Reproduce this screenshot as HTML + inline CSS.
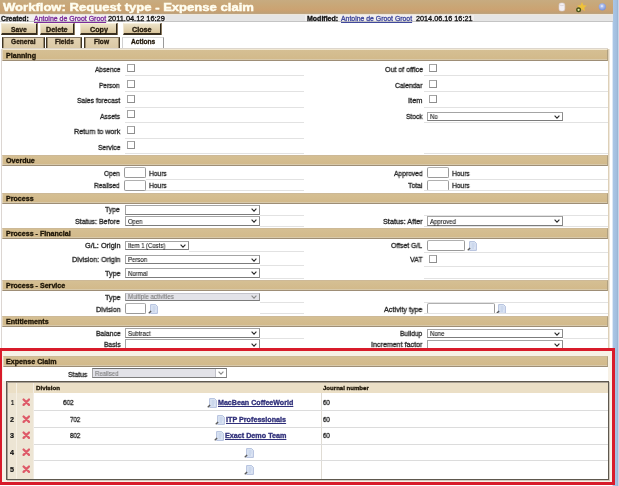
<!DOCTYPE html>
<html><head><meta charset="utf-8"><style>
html,body{margin:0;padding:0;}
body{width:619px;height:486px;overflow:hidden;position:relative;background:#fff;font-family:"Liberation Sans",sans-serif;}
div,svg{position:absolute;}
.t{white-space:nowrap;line-height:1em;transform-origin:0 0;will-change:transform;}
</style></head><body>
<div style="left:0px;top:0px;width:613px;height:14px;background:linear-gradient(#c7ab80 0%,#c9a676 45%,#cba272 70%,#c2a074 88%,#bca584 100%)"></div>
<div style="left:0px;top:14px;width:613px;height:1px;background:#ede6da"></div>
<div class="t" style="left:3.40px;top:2px;font-size:11.00px;font-weight:bold;color:#fffef0;transform:scaleX(1.1874);-webkit-text-stroke:0.45px #fffef0;">Workflow: Request type - Expense claim</div>
<svg style="position:absolute;left:556px;top:0px" width="54" height="14" viewBox="0 0 54 14">
<rect x="3" y="3" width="5.8" height="8" rx="2" fill="#f4f0f4" stroke="#d8d0d4" stroke-width="0.6"/><path d="M3.4,5 Q5.9,6.4 8.4,5" fill="none" stroke="#d0c8cc" stroke-width="0.6"/>
<polygon points="26,2 27.4,5.2 30.8,5.5 28.2,7.7 29,11 26,9.3 23,11 23.8,7.7 21.2,5.5 24.6,5.2" fill="#efc23a"/>
<circle cx="22.6" cy="9.8" r="2.5" fill="#4a5418"/><circle cx="22.6" cy="9.8" r="1.1" fill="#e8e4a8"/>
<defs><radialGradient id="gl" cx="0.45" cy="0.4" r="0.6"><stop offset="0" stop-color="#ffffff"/><stop offset="0.3" stop-color="#b4c4f0"/><stop offset="1" stop-color="#7890d8"/></radialGradient></defs><circle cx="46.3" cy="6.8" r="3.6" fill="url(#gl)"/>
</svg>
<div style="left:612px;top:22px;width:1px;height:464px;background:#dce8f6"></div>
<div style="left:613px;top:0px;width:5px;height:486px;background:linear-gradient(90deg,#aac6e6,#a2bede 70%,#98b2d2)"></div>
<div style="left:618px;top:0px;width:1px;height:486px;background:#c8d6e8"></div>
<div style="left:0px;top:15px;width:613px;height:6px;background:#e5e5e5"></div>
<div style="left:0px;top:21px;width:613px;height:1px;background:#c4c4c4"></div>
<div style="left:0px;top:15px;width:166px;height:6px;background:#f1efef"></div>
<div style="left:305px;top:15px;width:169px;height:6px;background:#f1efef"></div>
<div class="t" style="left:0.80px;top:16px;font-size:6.50px;font-weight:bold;color:#111;transform:scaleX(1.0543);-webkit-text-stroke:0.3px #111;">Created:</div>
<div class="t" style="left:33.90px;top:16px;font-size:6.50px;font-weight:normal;color:#7a2a9a;transform:scaleX(1.0728);-webkit-text-stroke:0.3px #7a2a9a;text-decoration:underline;">Antoine de Groot Groot</div>
<div class="t" style="left:108.00px;top:16px;font-size:6.50px;font-weight:normal;color:#111;transform:scaleX(1.1332);-webkit-text-stroke:0.3px #111;">2011.04.12 16:29</div>
<div class="t" style="left:307.00px;top:16px;font-size:6.50px;font-weight:bold;color:#111;transform:scaleX(1.0768);-webkit-text-stroke:0.3px #111;">Modified:</div>
<div class="t" style="left:341.40px;top:16px;font-size:6.50px;font-weight:normal;color:#40489c;transform:scaleX(1.0579);-webkit-text-stroke:0.3px #40489c;text-decoration:underline;">Antoine de Groot Groot</div>
<div class="t" style="left:416.00px;top:16px;font-size:6.50px;font-weight:normal;color:#111;transform:scaleX(1.1165);-webkit-text-stroke:0.3px #111;">2014.06.16 16:21</div>
<div style="left:1px;top:23px;width:36px;height:12px;background:linear-gradient(#ece2c8,#d9c59c);border-top:1px solid #f6efdc;border-left:1px solid #efe5cf;border-right:1px solid #2e2618;border-bottom:2px solid #3a3020;box-sizing:border-box;box-shadow:1px 0 0 #8a7a60;"></div>
<div class="t" style="left:11.30px;top:27px;font-size:6.50px;font-weight:bold;color:#241a0c;transform:scaleX(1.0408);-webkit-text-stroke:0.3px #241a0c;">Save</div>
<div style="left:40px;top:23px;width:34px;height:12px;background:linear-gradient(#ece2c8,#d9c59c);border-top:1px solid #f6efdc;border-left:1px solid #efe5cf;border-right:1px solid #2e2618;border-bottom:2px solid #3a3020;box-sizing:border-box;box-shadow:1px 0 0 #8a7a60;"></div>
<div class="t" style="left:45.50px;top:27px;font-size:6.50px;font-weight:bold;color:#241a0c;transform:scaleX(1.1071);-webkit-text-stroke:0.3px #241a0c;">Delete</div>
<div style="left:80px;top:23px;width:37px;height:12px;background:linear-gradient(#ece2c8,#d9c59c);border-top:1px solid #f6efdc;border-left:1px solid #efe5cf;border-right:1px solid #2e2618;border-bottom:2px solid #3a3020;box-sizing:border-box;box-shadow:1px 0 0 #8a7a60;"></div>
<div class="t" style="left:89.50px;top:27px;font-size:6.50px;font-weight:bold;color:#241a0c;transform:scaleX(1.1071);-webkit-text-stroke:0.3px #241a0c;">Copy</div>
<div style="left:123px;top:23px;width:38px;height:12px;background:linear-gradient(#ece2c8,#d9c59c);border-top:1px solid #f6efdc;border-left:1px solid #efe5cf;border-right:1px solid #2e2618;border-bottom:2px solid #3a3020;box-sizing:border-box;box-shadow:1px 0 0 #8a7a60;"></div>
<div class="t" style="left:132.20px;top:27px;font-size:6.50px;font-weight:bold;color:#241a0c;transform:scaleX(1.1071);-webkit-text-stroke:0.3px #241a0c;">Close</div>
<div style="left:2px;top:37px;width:43px;height:12px;background:linear-gradient(#e2d2b2,#dac8a4);border-left:1px solid #3e3424;border-top:1px solid #857660;border-right:1px solid #3e3424;box-sizing:border-box;box-shadow:inset 1px 0 0 #9a8a6c,inset -1px 0 0 #9a8a6c"></div>
<div class="t" style="left:11.30px;top:39px;font-size:6.50px;font-weight:bold;color:#241a0c;transform:scaleX(1.0162);-webkit-text-stroke:0.3px #241a0c;">General</div>
<div style="left:46px;top:37px;width:36px;height:12px;background:linear-gradient(#e2d2b2,#dac8a4);border-left:1px solid #3e3424;border-top:1px solid #857660;border-right:1px solid #3e3424;box-sizing:border-box;box-shadow:inset 1px 0 0 #9a8a6c,inset -1px 0 0 #9a8a6c"></div>
<div class="t" style="left:55.20px;top:39px;font-size:6.50px;font-weight:bold;color:#241a0c;transform:scaleX(0.9956);-webkit-text-stroke:0.3px #241a0c;">Fields</div>
<div style="left:84px;top:37px;width:36px;height:12px;background:linear-gradient(#e2d2b2,#dac8a4);border-left:1px solid #3e3424;border-top:1px solid #857660;border-right:1px solid #3e3424;box-sizing:border-box;box-shadow:inset 1px 0 0 #9a8a6c,inset -1px 0 0 #9a8a6c"></div>
<div class="t" style="left:94.48px;top:39px;font-size:6.50px;font-weight:bold;color:#241a0c;transform:scaleX(1.0162);-webkit-text-stroke:0.3px #241a0c;">Flow</div>
<div style="left:122px;top:37px;width:42px;height:13px;background:#fff;border-left:1px solid #d0d0d0;border-top:1px solid #dcdcdc;border-right:1px solid #9a9a9a;box-sizing:border-box"></div>
<div class="t" style="left:130.89px;top:39px;font-size:6.50px;font-weight:bold;color:#241a0c;transform:scaleX(1.0162);-webkit-text-stroke:0.3px #241a0c;">Actions</div>
<div style="left:1px;top:49px;width:1px;height:299px;background:#dcd6d2"></div>
<div style="left:608px;top:49px;width:1px;height:299px;background:#ddd0b8"></div>
<div style="left:609px;top:49px;width:1px;height:299px;background:#f0e8dc"></div>
<div style="left:2px;top:48px;width:606px;height:1px;background:#ddd6cc"></div>
<div style="left:2px;top:49px;width:606px;height:12px;background:linear-gradient(#d5bf93,#d2b98a);border-top:1px solid #cdb997;border-bottom:1px solid #9e8e76;border-right:1px solid #b0a080;border-left:1px solid #e0d2b8;box-sizing:border-box;box-shadow:inset 0 -1px 0 #d8c9aa;border-top-color:#f2e8d2"></div>
<div class="t" style="left:6.20px;top:53px;font-size:6.50px;font-weight:bold;color:#1c1406;transform:scaleX(1.0921);-webkit-text-stroke:0.3px #1c1406;">Planning</div>
<div style="left:2px;top:155px;width:606px;height:11px;background:linear-gradient(#d5bf93,#d2b98a);border-top:1px solid #cdb997;border-bottom:1px solid #9e8e76;border-right:1px solid #b0a080;border-left:1px solid #e0d2b8;box-sizing:border-box;box-shadow:inset 0 -1px 0 #d8c9aa"></div>
<div class="t" style="left:6.20px;top:158px;font-size:6.50px;font-weight:bold;color:#1c1406;transform:scaleX(1.0921);-webkit-text-stroke:0.3px #1c1406;">Overdue</div>
<div style="left:2px;top:193px;width:606px;height:11px;background:linear-gradient(#d5bf93,#d2b98a);border-top:1px solid #cdb997;border-bottom:1px solid #9e8e76;border-right:1px solid #b0a080;border-left:1px solid #e0d2b8;box-sizing:border-box;box-shadow:inset 0 -1px 0 #d8c9aa"></div>
<div class="t" style="left:6.20px;top:196px;font-size:6.50px;font-weight:bold;color:#1c1406;transform:scaleX(1.0921);-webkit-text-stroke:0.3px #1c1406;">Process</div>
<div style="left:2px;top:228px;width:606px;height:11px;background:linear-gradient(#d5bf93,#d2b98a);border-top:1px solid #cdb997;border-bottom:1px solid #9e8e76;border-right:1px solid #b0a080;border-left:1px solid #e0d2b8;box-sizing:border-box;box-shadow:inset 0 -1px 0 #d8c9aa"></div>
<div class="t" style="left:6.20px;top:231px;font-size:6.50px;font-weight:bold;color:#1c1406;transform:scaleX(1.0921);-webkit-text-stroke:0.3px #1c1406;">Process - Financial</div>
<div style="left:2px;top:280px;width:606px;height:11px;background:linear-gradient(#d5bf93,#d2b98a);border-top:1px solid #cdb997;border-bottom:1px solid #9e8e76;border-right:1px solid #b0a080;border-left:1px solid #e0d2b8;box-sizing:border-box;box-shadow:inset 0 -1px 0 #d8c9aa"></div>
<div class="t" style="left:6.20px;top:283px;font-size:6.50px;font-weight:bold;color:#1c1406;transform:scaleX(1.0921);-webkit-text-stroke:0.3px #1c1406;">Process - Service</div>
<div style="left:2px;top:316px;width:606px;height:11px;background:linear-gradient(#d5bf93,#d2b98a);border-top:1px solid #cdb997;border-bottom:1px solid #9e8e76;border-right:1px solid #b0a080;border-left:1px solid #e0d2b8;box-sizing:border-box;box-shadow:inset 0 -1px 0 #d8c9aa"></div>
<div class="t" style="left:6.20px;top:319px;font-size:6.50px;font-weight:bold;color:#1c1406;transform:scaleX(1.0921);-webkit-text-stroke:0.3px #1c1406;">Entitlements</div>
<div class="t" style="left:94.50px;top:66px;font-size:7.30px;font-weight:normal;color:#262626;transform:scaleX(0.8976);-webkit-text-stroke:0.3px #262626;">Absence</div>
<div style="left:127px;top:64px;width:8px;height:8px;border:1px solid #8e8e8e;border-top-color:#a4a4a4;border-left-color:#a4a4a4;background:#fff;box-sizing:border-box"></div>
<div class="t" style="left:99.40px;top:82px;font-size:7.30px;font-weight:normal;color:#262626;transform:scaleX(0.8906);-webkit-text-stroke:0.3px #262626;">Person</div>
<div style="left:127px;top:80px;width:8px;height:8px;border:1px solid #8e8e8e;border-top-color:#a4a4a4;border-left-color:#a4a4a4;background:#fff;box-sizing:border-box"></div>
<div class="t" style="left:76.80px;top:97px;font-size:7.30px;font-weight:normal;color:#262626;transform:scaleX(0.9339);-webkit-text-stroke:0.3px #262626;">Sales forecast</div>
<div style="left:127px;top:95px;width:8px;height:8px;border:1px solid #8e8e8e;border-top-color:#a4a4a4;border-left-color:#a4a4a4;background:#fff;box-sizing:border-box"></div>
<div class="t" style="left:100.00px;top:113px;font-size:7.30px;font-weight:normal;color:#262626;transform:scaleX(0.9129);-webkit-text-stroke:0.3px #262626;">Assets</div>
<div style="left:127px;top:110px;width:8px;height:8px;border:1px solid #8e8e8e;border-top-color:#a4a4a4;border-left-color:#a4a4a4;background:#fff;box-sizing:border-box"></div>
<div class="t" style="left:73.60px;top:128px;font-size:7.30px;font-weight:normal;color:#262626;transform:scaleX(0.9775);-webkit-text-stroke:0.3px #262626;">Return to work</div>
<div style="left:127px;top:126px;width:8px;height:8px;border:1px solid #8e8e8e;border-top-color:#a4a4a4;border-left-color:#a4a4a4;background:#fff;box-sizing:border-box"></div>
<div class="t" style="left:97.50px;top:144px;font-size:7.30px;font-weight:normal;color:#262626;transform:scaleX(0.9243);-webkit-text-stroke:0.3px #262626;">Service</div>
<div style="left:127px;top:141px;width:8px;height:8px;border:1px solid #8e8e8e;border-top-color:#a4a4a4;border-left-color:#a4a4a4;background:#fff;box-sizing:border-box"></div>
<div style="left:125px;top:75px;width:179px;height:1px;background:#e2e2e2"></div>
<div style="left:125px;top:91px;width:179px;height:1px;background:#e2e2e2"></div>
<div style="left:125px;top:107px;width:179px;height:1px;background:#e2e2e2"></div>
<div style="left:125px;top:122px;width:179px;height:1px;background:#e2e2e2"></div>
<div style="left:125px;top:138px;width:179px;height:1px;background:#e2e2e2"></div>
<div class="t" style="left:384.60px;top:66px;font-size:7.30px;font-weight:normal;color:#262626;transform:scaleX(0.9687);-webkit-text-stroke:0.3px #262626;">Out of office</div>
<div style="left:429px;top:64px;width:8px;height:8px;border:1px solid #8e8e8e;border-top-color:#a4a4a4;border-left-color:#a4a4a4;background:#fff;box-sizing:border-box"></div>
<div class="t" style="left:395.20px;top:82px;font-size:7.30px;font-weight:normal;color:#262626;transform:scaleX(0.9249);-webkit-text-stroke:0.3px #262626;">Calendar</div>
<div style="left:429px;top:80px;width:8px;height:8px;border:1px solid #8e8e8e;border-top-color:#a4a4a4;border-left-color:#a4a4a4;background:#fff;box-sizing:border-box"></div>
<div class="t" style="left:408.10px;top:97px;font-size:7.30px;font-weight:normal;color:#262626;transform:scaleX(1.0213);-webkit-text-stroke:0.3px #262626;">Item</div>
<div style="left:429px;top:95px;width:8px;height:8px;border:1px solid #8e8e8e;border-top-color:#a4a4a4;border-left-color:#a4a4a4;background:#fff;box-sizing:border-box"></div>
<div class="t" style="left:405.90px;top:113px;font-size:7.30px;font-weight:normal;color:#262626;transform:scaleX(0.9147);-webkit-text-stroke:0.3px #262626;">Stock</div>
<div style="left:427px;top:112px;width:136px;height:9px;background:#fff;border:1px solid #a4a4a4;border-top-color:#a4a4a4;border-bottom-color:#7c7c7c;border-right-color:#8c8c8c;box-sizing:border-box"></div>
<svg style="position:absolute;left:553.50px;top:114.50px" width="6" height="4" viewBox="0 0 6 4"><polyline points="0.6,0.7 3,3.1 5.4,0.7" fill="none" stroke="#2a2a2a" stroke-width="1.15"/></svg>
<div class="t" style="left:429.50px;top:114px;font-size:6.50px;font-weight:normal;color:#141414;transform:scaleX(0.9300);-webkit-text-stroke:0.1px #141414;">No</div>
<div style="left:424px;top:75px;width:184px;height:1px;background:#e2e2e2"></div>
<div style="left:424px;top:91px;width:184px;height:1px;background:#e2e2e2"></div>
<div style="left:424px;top:107px;width:184px;height:1px;background:#e2e2e2"></div>
<div style="left:424px;top:122px;width:184px;height:1px;background:#e2e2e2"></div>
<div class="t" style="left:103.90px;top:170px;font-size:7.30px;font-weight:normal;color:#262626;transform:scaleX(0.8903);-webkit-text-stroke:0.3px #262626;">Open</div>
<div style="left:124px;top:167px;width:22px;height:11px;border:1px solid #9a9a9a;border-top-color:#b0b0b0;border-radius:2px;background:#fff;box-sizing:border-box"></div>
<div class="t" style="left:148.60px;top:170px;font-size:7.30px;font-weight:normal;color:#262626;transform:scaleX(0.9089);-webkit-text-stroke:0.3px #262626;">Hours</div>
<div class="t" style="left:94.20px;top:182px;font-size:7.30px;font-weight:normal;color:#262626;transform:scaleX(0.9012);-webkit-text-stroke:0.3px #262626;">Realised</div>
<div style="left:124px;top:180px;width:22px;height:11px;border:1px solid #9a9a9a;border-top-color:#b0b0b0;border-radius:2px;background:#fff;box-sizing:border-box"></div>
<div class="t" style="left:148.60px;top:182px;font-size:7.30px;font-weight:normal;color:#262626;transform:scaleX(0.9089);-webkit-text-stroke:0.3px #262626;">Hours</div>
<div style="left:146px;top:179px;width:158px;height:1px;background:#e2e2e2"></div>
<div class="t" style="left:393.90px;top:170px;font-size:7.30px;font-weight:normal;color:#262626;transform:scaleX(0.9152);-webkit-text-stroke:0.3px #262626;">Approved</div>
<div style="left:427px;top:167px;width:22px;height:11px;border:1px solid #9a9a9a;border-top-color:#b0b0b0;border-radius:2px;background:#fff;box-sizing:border-box"></div>
<div class="t" style="left:451.60px;top:170px;font-size:7.30px;font-weight:normal;color:#262626;transform:scaleX(0.9089);-webkit-text-stroke:0.3px #262626;">Hours</div>
<div class="t" style="left:408.00px;top:182px;font-size:7.30px;font-weight:normal;color:#262626;transform:scaleX(0.9403);-webkit-text-stroke:0.3px #262626;">Total</div>
<div style="left:427px;top:180px;width:22px;height:11px;border:1px solid #9a9a9a;border-top-color:#b0b0b0;border-radius:2px;background:#fff;box-sizing:border-box"></div>
<div class="t" style="left:451.60px;top:182px;font-size:7.30px;font-weight:normal;color:#262626;transform:scaleX(0.9089);-webkit-text-stroke:0.3px #262626;">Hours</div>
<div style="left:449px;top:179px;width:159px;height:1px;background:#e2e2e2"></div>
<div class="t" style="left:105.00px;top:206px;font-size:7.30px;font-weight:normal;color:#262626;transform:scaleX(0.9351);-webkit-text-stroke:0.3px #262626;">Type</div>
<div style="left:125px;top:205px;width:135px;height:10px;background:#fff;border:1px solid #a4a4a4;border-top-color:#a4a4a4;border-bottom-color:#7c7c7c;border-right-color:#8c8c8c;box-sizing:border-box"></div>
<svg style="position:absolute;left:250.50px;top:208.00px" width="6" height="4" viewBox="0 0 6 4"><polyline points="0.6,0.7 3,3.1 5.4,0.7" fill="none" stroke="#2a2a2a" stroke-width="1.15"/></svg>
<div class="t" style="left:75.00px;top:218px;font-size:7.30px;font-weight:normal;color:#262626;transform:scaleX(0.9684);-webkit-text-stroke:0.3px #262626;">Status: Before</div>
<div style="left:125px;top:216px;width:135px;height:10px;background:#fff;border:1px solid #a4a4a4;border-top-color:#a4a4a4;border-bottom-color:#7c7c7c;border-right-color:#8c8c8c;box-sizing:border-box"></div>
<svg style="position:absolute;left:250.50px;top:219.00px" width="6" height="4" viewBox="0 0 6 4"><polyline points="0.6,0.7 3,3.1 5.4,0.7" fill="none" stroke="#2a2a2a" stroke-width="1.15"/></svg>
<div class="t" style="left:127.50px;top:219px;font-size:6.50px;font-weight:normal;color:#141414;transform:scaleX(0.9056);-webkit-text-stroke:0.1px #141414;">Open</div>
<div style="left:260px;top:215px;width:44px;height:1px;background:#e2e2e2"></div>
<div class="t" style="left:382.90px;top:218px;font-size:7.30px;font-weight:normal;color:#262626;transform:scaleX(0.9958);-webkit-text-stroke:0.3px #262626;">Status: After</div>
<div style="left:427px;top:216px;width:136px;height:10px;background:#fff;border:1px solid #a4a4a4;border-top-color:#a4a4a4;border-bottom-color:#7c7c7c;border-right-color:#8c8c8c;box-sizing:border-box"></div>
<svg style="position:absolute;left:553.50px;top:219.00px" width="6" height="4" viewBox="0 0 6 4"><polyline points="0.6,0.7 3,3.1 5.4,0.7" fill="none" stroke="#2a2a2a" stroke-width="1.15"/></svg>
<div class="t" style="left:429.50px;top:219px;font-size:6.50px;font-weight:normal;color:#141414;transform:scaleX(0.9300);-webkit-text-stroke:0.1px #141414;">Approved</div>
<div style="left:424px;top:215px;width:184px;height:1px;background:#e2e2e2"></div>
<div class="t" style="left:84.90px;top:242px;font-size:7.30px;font-weight:normal;color:#262626;transform:scaleX(1.0058);-webkit-text-stroke:0.3px #262626;">G/L: Origin</div>
<div style="left:125px;top:241px;width:64px;height:9px;background:#fff;border:1px solid #a4a4a4;border-top-color:#a4a4a4;border-bottom-color:#7c7c7c;border-right-color:#8c8c8c;box-sizing:border-box"></div>
<svg style="position:absolute;left:179.50px;top:243.50px" width="6" height="4" viewBox="0 0 6 4"><polyline points="0.6,0.7 3,3.1 5.4,0.7" fill="none" stroke="#2a2a2a" stroke-width="1.15"/></svg>
<div class="t" style="left:127.50px;top:243px;font-size:6.50px;font-weight:normal;color:#141414;transform:scaleX(0.9115);-webkit-text-stroke:0.1px #141414;">Item 1 (Costs)</div>
<div class="t" style="left:72.00px;top:256px;font-size:7.30px;font-weight:normal;color:#262626;transform:scaleX(0.9860);-webkit-text-stroke:0.3px #262626;">Division: Origin</div>
<div style="left:125px;top:255px;width:135px;height:9px;background:#fff;border:1px solid #a4a4a4;border-top-color:#a4a4a4;border-bottom-color:#7c7c7c;border-right-color:#8c8c8c;box-sizing:border-box"></div>
<svg style="position:absolute;left:250.50px;top:257.50px" width="6" height="4" viewBox="0 0 6 4"><polyline points="0.6,0.7 3,3.1 5.4,0.7" fill="none" stroke="#2a2a2a" stroke-width="1.15"/></svg>
<div class="t" style="left:127.50px;top:257px;font-size:6.50px;font-weight:normal;color:#141414;transform:scaleX(0.9300);-webkit-text-stroke:0.1px #141414;">Person</div>
<div class="t" style="left:104.90px;top:270px;font-size:7.30px;font-weight:normal;color:#262626;transform:scaleX(0.9794);-webkit-text-stroke:0.3px #262626;">Type</div>
<div style="left:125px;top:268px;width:135px;height:10px;background:#fff;border:1px solid #a4a4a4;border-top-color:#a4a4a4;border-bottom-color:#7c7c7c;border-right-color:#8c8c8c;box-sizing:border-box"></div>
<svg style="position:absolute;left:250.50px;top:271.00px" width="6" height="4" viewBox="0 0 6 4"><polyline points="0.6,0.7 3,3.1 5.4,0.7" fill="none" stroke="#2a2a2a" stroke-width="1.15"/></svg>
<div class="t" style="left:127.50px;top:271px;font-size:6.50px;font-weight:normal;color:#141414;transform:scaleX(0.9300);-webkit-text-stroke:0.1px #141414;">Normal</div>
<div style="left:189px;top:251px;width:115px;height:1px;background:#e2e2e2"></div>
<div style="left:260px;top:265px;width:44px;height:1px;background:#e2e2e2"></div>
<div class="t" style="left:391.30px;top:242px;font-size:7.30px;font-weight:normal;color:#262626;transform:scaleX(0.9416);-webkit-text-stroke:0.3px #262626;">Offset G/L</div>
<div style="left:427px;top:240px;width:38px;height:11px;border:1px solid #9a9a9a;border-top-color:#b0b0b0;border-radius:2px;background:#fff;box-sizing:border-box"></div>
<svg style="position:absolute;left:467.00px;top:240.50px" width="10" height="10" viewBox="0 0 10 10">
<path d="M2.6,0.6 H7.6 L9.4,2.4 V9.4 H2.6 Z" fill="#dce5f4" stroke="#a4b4d6" stroke-width="0.8"/>
<path d="M4.5,3 H7.6 M4.5,5 H7.6 M4.5,7 H7" stroke="#a8b8dc" stroke-width="0.6"/>
<path d="M0.3,8.8 L2.6,6.4 L3.6,7.6 L1.2,9.7 Z" fill="#5a5a5a"/>
</svg>
<div class="t" style="left:410.00px;top:256px;font-size:7.30px;font-weight:normal;color:#262626;transform:scaleX(0.9532);-webkit-text-stroke:0.3px #262626;">VAT</div>
<div style="left:429px;top:255px;width:8px;height:8px;border:1px solid #8e8e8e;border-top-color:#a4a4a4;border-left-color:#a4a4a4;background:#fff;box-sizing:border-box"></div>
<div style="left:424px;top:252px;width:184px;height:1px;background:#e2e2e2"></div>
<div style="left:424px;top:266px;width:184px;height:1px;background:#e2e2e2"></div>
<div class="t" style="left:104.90px;top:294px;font-size:7.30px;font-weight:normal;color:#262626;transform:scaleX(0.9794);-webkit-text-stroke:0.3px #262626;">Type</div>
<div style="left:125px;top:293px;width:135px;height:8px;background:#e2e2e8;border:1px solid #a4a4a4;border-top-color:#c4c4cc;border-bottom-color:#7c7c7c;border-right-color:#8c8c8c;box-sizing:border-box"></div>
<svg style="position:absolute;left:250.50px;top:295.00px" width="6" height="4" viewBox="0 0 6 4"><polyline points="0.6,0.7 3,3.1 5.4,0.7" fill="none" stroke="#8a8a8a" stroke-width="1.15"/></svg>
<div class="t" style="left:127.50px;top:294px;font-size:6.50px;font-weight:normal;color:#7a7a7a;transform:scaleX(0.9300);-webkit-text-stroke:0.1px #7a7a7a;">Multiple activities</div>
<div class="t" style="left:95.70px;top:306px;font-size:7.30px;font-weight:normal;color:#262626;transform:scaleX(0.9664);-webkit-text-stroke:0.3px #262626;">Division</div>
<div style="left:125px;top:303px;width:21px;height:11px;border:1px solid #9a9a9a;border-top-color:#b0b0b0;border-radius:2px;background:#fff;box-sizing:border-box"></div>
<svg style="position:absolute;left:148.00px;top:303.80px" width="10" height="10" viewBox="0 0 10 10">
<path d="M2.6,0.6 H7.6 L9.4,2.4 V9.4 H2.6 Z" fill="#dce5f4" stroke="#a4b4d6" stroke-width="0.8"/>
<path d="M4.5,3 H7.6 M4.5,5 H7.6 M4.5,7 H7" stroke="#a8b8dc" stroke-width="0.6"/>
<path d="M0.3,8.8 L2.6,6.4 L3.6,7.6 L1.2,9.7 Z" fill="#5a5a5a"/>
</svg>
<div style="left:260px;top:302px;width:44px;height:1px;background:#e2e2e2"></div>
<div class="t" style="left:384.00px;top:306px;font-size:7.30px;font-weight:normal;color:#262626;transform:scaleX(0.9885);-webkit-text-stroke:0.3px #262626;">Activity type</div>
<div style="left:427px;top:303px;width:68px;height:11px;border:1px solid #9a9a9a;border-top-color:#b0b0b0;border-radius:2px;background:#fff;box-sizing:border-box"></div>
<svg style="position:absolute;left:496.00px;top:303.80px" width="10" height="10" viewBox="0 0 10 10">
<path d="M2.6,0.6 H7.6 L9.4,2.4 V9.4 H2.6 Z" fill="#dce5f4" stroke="#a4b4d6" stroke-width="0.8"/>
<path d="M4.5,3 H7.6 M4.5,5 H7.6 M4.5,7 H7" stroke="#a8b8dc" stroke-width="0.6"/>
<path d="M0.3,8.8 L2.6,6.4 L3.6,7.6 L1.2,9.7 Z" fill="#5a5a5a"/>
</svg>
<div style="left:424px;top:302px;width:184px;height:1px;background:#e2e2e2"></div>
<div class="t" style="left:95.70px;top:330px;font-size:7.30px;font-weight:normal;color:#262626;transform:scaleX(0.9363);-webkit-text-stroke:0.3px #262626;">Balance</div>
<div style="left:125px;top:328px;width:135px;height:10px;background:#fff;border:1px solid #a4a4a4;border-top-color:#a4a4a4;border-bottom-color:#7c7c7c;border-right-color:#8c8c8c;box-sizing:border-box"></div>
<svg style="position:absolute;left:250.50px;top:331.00px" width="6" height="4" viewBox="0 0 6 4"><polyline points="0.6,0.7 3,3.1 5.4,0.7" fill="none" stroke="#2a2a2a" stroke-width="1.15"/></svg>
<div class="t" style="left:127.50px;top:331px;font-size:6.50px;font-weight:normal;color:#141414;transform:scaleX(0.9300);-webkit-text-stroke:0.1px #141414;">Subtract</div>
<div class="t" style="left:103.80px;top:341px;font-size:7.30px;font-weight:normal;color:#262626;transform:scaleX(0.9299);-webkit-text-stroke:0.3px #262626;">Basis</div>
<div style="left:125px;top:339px;width:135px;height:11px;background:#fff;border:1px solid #a4a4a4;border-top-color:#a4a4a4;border-bottom-color:#7c7c7c;border-right-color:#8c8c8c;box-sizing:border-box"></div>
<svg style="position:absolute;left:250.50px;top:342.50px" width="6" height="4" viewBox="0 0 6 4"><polyline points="0.6,0.7 3,3.1 5.4,0.7" fill="none" stroke="#2a2a2a" stroke-width="1.15"/></svg>
<div style="left:260px;top:338px;width:44px;height:1px;background:#e2e2e2"></div>
<div class="t" style="left:400.30px;top:330px;font-size:7.30px;font-weight:normal;color:#262626;transform:scaleX(0.9116);-webkit-text-stroke:0.3px #262626;">Buildup</div>
<div style="left:427px;top:329px;width:136px;height:9px;background:#fff;border:1px solid #a4a4a4;border-top-color:#a4a4a4;border-bottom-color:#7c7c7c;border-right-color:#8c8c8c;box-sizing:border-box"></div>
<svg style="position:absolute;left:553.50px;top:331.50px" width="6" height="4" viewBox="0 0 6 4"><polyline points="0.6,0.7 3,3.1 5.4,0.7" fill="none" stroke="#2a2a2a" stroke-width="1.15"/></svg>
<div class="t" style="left:429.50px;top:331px;font-size:6.50px;font-weight:normal;color:#141414;transform:scaleX(0.9300);-webkit-text-stroke:0.1px #141414;">None</div>
<div class="t" style="left:371.20px;top:341px;font-size:7.30px;font-weight:normal;color:#262626;transform:scaleX(0.9726);-webkit-text-stroke:0.3px #262626;">Increment factor</div>
<div style="left:427px;top:340px;width:136px;height:10px;background:#fff;border:1px solid #a4a4a4;border-top-color:#a4a4a4;border-bottom-color:#7c7c7c;border-right-color:#8c8c8c;box-sizing:border-box"></div>
<svg style="position:absolute;left:553.50px;top:343.00px" width="6" height="4" viewBox="0 0 6 4"><polyline points="0.6,0.7 3,3.1 5.4,0.7" fill="none" stroke="#2a2a2a" stroke-width="1.15"/></svg>
<div style="left:563px;top:338px;width:45px;height:1px;background:#e2e2e2"></div>
<div style="left:125px;top:153px;width:179px;height:1px;background:#e2e2e2"></div>
<div style="left:424px;top:153px;width:184px;height:1px;background:#e2e2e2"></div>
<div style="left:146px;top:190px;width:158px;height:1px;background:#e2e2e2"></div>
<div style="left:424px;top:190px;width:184px;height:1px;background:#e2e2e2"></div>
<div style="left:260px;top:226px;width:44px;height:1px;background:#e2e2e2"></div>
<div style="left:424px;top:226px;width:184px;height:1px;background:#e2e2e2"></div>
<div style="left:260px;top:278px;width:44px;height:1px;background:#e2e2e2"></div>
<div style="left:424px;top:278px;width:184px;height:1px;background:#e2e2e2"></div>
<div style="left:260px;top:313px;width:44px;height:1px;background:#e2e2e2"></div>
<div style="left:424px;top:313px;width:184px;height:1px;background:#e2e2e2"></div>
<div style="left:2px;top:351px;width:610px;height:131px;background:#f7f1e6"></div>
<div style="left:0px;top:348px;width:615px;height:137px;border:3px solid #d81b2a;border-left-width:2px;box-sizing:border-box"></div>
<div style="left:3px;top:356px;width:605px;height:11px;background:linear-gradient(#d5bf93,#d2b98a);border-top:1px solid #cdb997;border-bottom:1px solid #9e8e76;border-right:1px solid #b0a080;border-left:1px solid #e0d2b8;box-sizing:border-box;box-shadow:inset 0 -1px 0 #d8c9aa"></div>
<div class="t" style="left:6.20px;top:359px;font-size:6.50px;font-weight:bold;color:#1c1406;transform:scaleX(1.0921);-webkit-text-stroke:0.3px #1c1406;">Expense Claim</div>
<div style="left:3px;top:367px;width:605px;height:14px;background:#fff"></div>
<div class="t" style="left:67.80px;top:371px;font-size:7.30px;font-weight:normal;color:#262626;transform:scaleX(0.9326);-webkit-text-stroke:0.3px #262626;">Status</div>
<div style="left:92px;top:368px;width:135px;height:10px;background:#e2e2e8;border:1px solid #a4a4a4;border-top-color:#707070;border-bottom-color:#7c7c7c;border-right-color:#8c8c8c;box-sizing:border-box"></div>
<div style="left:215px;top:369px;width:11px;height:8px;background:#fff;border-left:1px solid #c0c0c8;box-sizing:border-box"></div>
<svg style="position:absolute;left:217.50px;top:371.00px" width="6" height="4" viewBox="0 0 6 4"><polyline points="0.6,0.7 3,3.1 5.4,0.7" fill="none" stroke="#8a8a8a" stroke-width="1.15"/></svg>
<div class="t" style="left:94.50px;top:371px;font-size:6.50px;font-weight:normal;color:#7a7a7a;transform:scaleX(0.9300);-webkit-text-stroke:0.1px #7a7a7a;">Realised</div>
<div style="left:6px;top:381px;width:603px;height:99px;border:1px solid #5e584e;background:#fff;box-sizing:border-box;box-shadow:inset 1px 1px 0 #a89f92,1px 1px 0 #d0c8bc"></div>
<div style="left:8px;top:383px;width:600px;height:10px;background:#ebdfc6"></div>
<div style="left:8px;top:393px;width:26px;height:86px;background:#ede5d4"></div>
<div style="left:16px;top:383px;width:1px;height:96px;background:#f6f0e4"></div>
<div style="left:33px;top:383px;width:1px;height:96px;background:#f2ede4"></div>
<div style="left:321px;top:393px;width:1px;height:86px;background:#e0dcd4"></div>
<div class="t" style="left:35.80px;top:385px;font-size:6.00px;font-weight:bold;color:#1c1406;transform:scaleX(1.0326);-webkit-text-stroke:0.3px #1c1406;">Division</div>
<div class="t" style="left:323.10px;top:385px;font-size:6.00px;font-weight:bold;color:#1c1406;transform:scaleX(1.0101);-webkit-text-stroke:0.3px #1c1406;">Journal number</div>
<div style="left:34px;top:410px;width:574px;height:1px;background:#dcdcdc"></div>
<div style="left:34px;top:427px;width:574px;height:1px;background:#dcdcdc"></div>
<div style="left:34px;top:444px;width:574px;height:1px;background:#dcdcdc"></div>
<div style="left:34px;top:460px;width:574px;height:1px;background:#dcdcdc"></div>
<div class="t" style="left:10.70px;top:400px;font-size:6.50px;font-weight:bold;color:#111;transform:scaleX(0.8022);-webkit-text-stroke:0.2px #111;">1</div>
<svg style="position:absolute;left:21.8px;top:398.00px" width="8.6" height="8.4" viewBox="0 0 9 9"><path d="M1.6,1.6 L7.4,7.4 M7.4,1.6 L1.6,7.4" stroke="#de5a68" stroke-width="2.4" stroke-linecap="round"/></svg>
<div class="t" style="left:10.40px;top:417px;font-size:6.50px;font-weight:bold;color:#111;transform:scaleX(1.1065);-webkit-text-stroke:0.2px #111;">2</div>
<svg style="position:absolute;left:21.8px;top:415.00px" width="8.6" height="8.4" viewBox="0 0 9 9"><path d="M1.6,1.6 L7.4,7.4 M7.4,1.6 L1.6,7.4" stroke="#de5a68" stroke-width="2.4" stroke-linecap="round"/></svg>
<div class="t" style="left:10.40px;top:433px;font-size:6.50px;font-weight:bold;color:#111;transform:scaleX(1.1065);-webkit-text-stroke:0.2px #111;">3</div>
<svg style="position:absolute;left:21.8px;top:431.00px" width="8.6" height="8.4" viewBox="0 0 9 9"><path d="M1.6,1.6 L7.4,7.4 M7.4,1.6 L1.6,7.4" stroke="#de5a68" stroke-width="2.4" stroke-linecap="round"/></svg>
<div class="t" style="left:10.40px;top:450px;font-size:6.50px;font-weight:bold;color:#111;transform:scaleX(1.1065);-webkit-text-stroke:0.2px #111;">4</div>
<svg style="position:absolute;left:21.8px;top:448.00px" width="8.6" height="8.4" viewBox="0 0 9 9"><path d="M1.6,1.6 L7.4,7.4 M7.4,1.6 L1.6,7.4" stroke="#de5a68" stroke-width="2.4" stroke-linecap="round"/></svg>
<div class="t" style="left:10.40px;top:467px;font-size:6.50px;font-weight:bold;color:#111;transform:scaleX(1.1065);-webkit-text-stroke:0.2px #111;">5</div>
<svg style="position:absolute;left:21.8px;top:465.00px" width="8.6" height="8.4" viewBox="0 0 9 9"><path d="M1.6,1.6 L7.4,7.4 M7.4,1.6 L1.6,7.4" stroke="#de5a68" stroke-width="2.4" stroke-linecap="round"/></svg>
<div class="t" style="left:62.70px;top:399px;font-size:7.00px;font-weight:normal;color:#222;transform:scaleX(0.9161);-webkit-text-stroke:0.3px #222;">602</div>
<svg style="position:absolute;left:207.30px;top:398.00px" width="10" height="10" viewBox="0 0 10 10">
<path d="M2.6,0.6 H7.6 L9.4,2.4 V9.4 H2.6 Z" fill="#dce5f4" stroke="#a4b4d6" stroke-width="0.8"/>
<path d="M4.5,3 H7.6 M4.5,5 H7.6 M4.5,7 H7" stroke="#a8b8dc" stroke-width="0.6"/>
<path d="M0.3,8.8 L2.6,6.4 L3.6,7.6 L1.2,9.7 Z" fill="#5a5a5a"/>
</svg>
<div class="t" style="left:218.10px;top:400px;font-size:6.50px;font-weight:bold;color:#30307a;transform:scaleX(1.0934);-webkit-text-stroke:0.3px #30307a;text-decoration:underline;">MacBean CoffeeWorld</div>
<div class="t" style="left:323.40px;top:399px;font-size:7.00px;font-weight:normal;color:#222;transform:scaleX(0.8605);-webkit-text-stroke:0.3px #222;">60</div>
<div class="t" style="left:70.40px;top:416px;font-size:7.00px;font-weight:normal;color:#222;transform:scaleX(0.8733);-webkit-text-stroke:0.3px #222;">702</div>
<svg style="position:absolute;left:214.50px;top:415.00px" width="10" height="10" viewBox="0 0 10 10">
<path d="M2.6,0.6 H7.6 L9.4,2.4 V9.4 H2.6 Z" fill="#dce5f4" stroke="#a4b4d6" stroke-width="0.8"/>
<path d="M4.5,3 H7.6 M4.5,5 H7.6 M4.5,7 H7" stroke="#a8b8dc" stroke-width="0.6"/>
<path d="M0.3,8.8 L2.6,6.4 L3.6,7.6 L1.2,9.7 Z" fill="#5a5a5a"/>
</svg>
<div class="t" style="left:225.50px;top:417px;font-size:6.50px;font-weight:bold;color:#30307a;transform:scaleX(1.1042);-webkit-text-stroke:0.3px #30307a;text-decoration:underline;">ITP Professionals</div>
<div class="t" style="left:323.40px;top:416px;font-size:7.00px;font-weight:normal;color:#222;transform:scaleX(0.8605);-webkit-text-stroke:0.3px #222;">60</div>
<div class="t" style="left:69.50px;top:432px;font-size:7.00px;font-weight:normal;color:#222;transform:scaleX(0.8819);-webkit-text-stroke:0.3px #222;">802</div>
<svg style="position:absolute;left:213.70px;top:431.00px" width="10" height="10" viewBox="0 0 10 10">
<path d="M2.6,0.6 H7.6 L9.4,2.4 V9.4 H2.6 Z" fill="#dce5f4" stroke="#a4b4d6" stroke-width="0.8"/>
<path d="M4.5,3 H7.6 M4.5,5 H7.6 M4.5,7 H7" stroke="#a8b8dc" stroke-width="0.6"/>
<path d="M0.3,8.8 L2.6,6.4 L3.6,7.6 L1.2,9.7 Z" fill="#5a5a5a"/>
</svg>
<div class="t" style="left:225.00px;top:433px;font-size:6.50px;font-weight:bold;color:#30307a;transform:scaleX(1.1060);-webkit-text-stroke:0.3px #30307a;text-decoration:underline;">Exact Demo Team</div>
<div class="t" style="left:323.40px;top:432px;font-size:7.00px;font-weight:normal;color:#222;transform:scaleX(0.8605);-webkit-text-stroke:0.3px #222;">60</div>
<svg style="position:absolute;left:244.30px;top:447.50px" width="10" height="10" viewBox="0 0 10 10">
<path d="M2.6,0.6 H7.6 L9.4,2.4 V9.4 H2.6 Z" fill="#dce5f4" stroke="#a4b4d6" stroke-width="0.8"/>
<path d="M4.5,3 H7.6 M4.5,5 H7.6 M4.5,7 H7" stroke="#a8b8dc" stroke-width="0.6"/>
<path d="M0.3,8.8 L2.6,6.4 L3.6,7.6 L1.2,9.7 Z" fill="#5a5a5a"/>
</svg>
<svg style="position:absolute;left:244.30px;top:464.50px" width="10" height="10" viewBox="0 0 10 10">
<path d="M2.6,0.6 H7.6 L9.4,2.4 V9.4 H2.6 Z" fill="#dce5f4" stroke="#a4b4d6" stroke-width="0.8"/>
<path d="M4.5,3 H7.6 M4.5,5 H7.6 M4.5,7 H7" stroke="#a8b8dc" stroke-width="0.6"/>
<path d="M0.3,8.8 L2.6,6.4 L3.6,7.6 L1.2,9.7 Z" fill="#5a5a5a"/>
</svg>
</body></html>
